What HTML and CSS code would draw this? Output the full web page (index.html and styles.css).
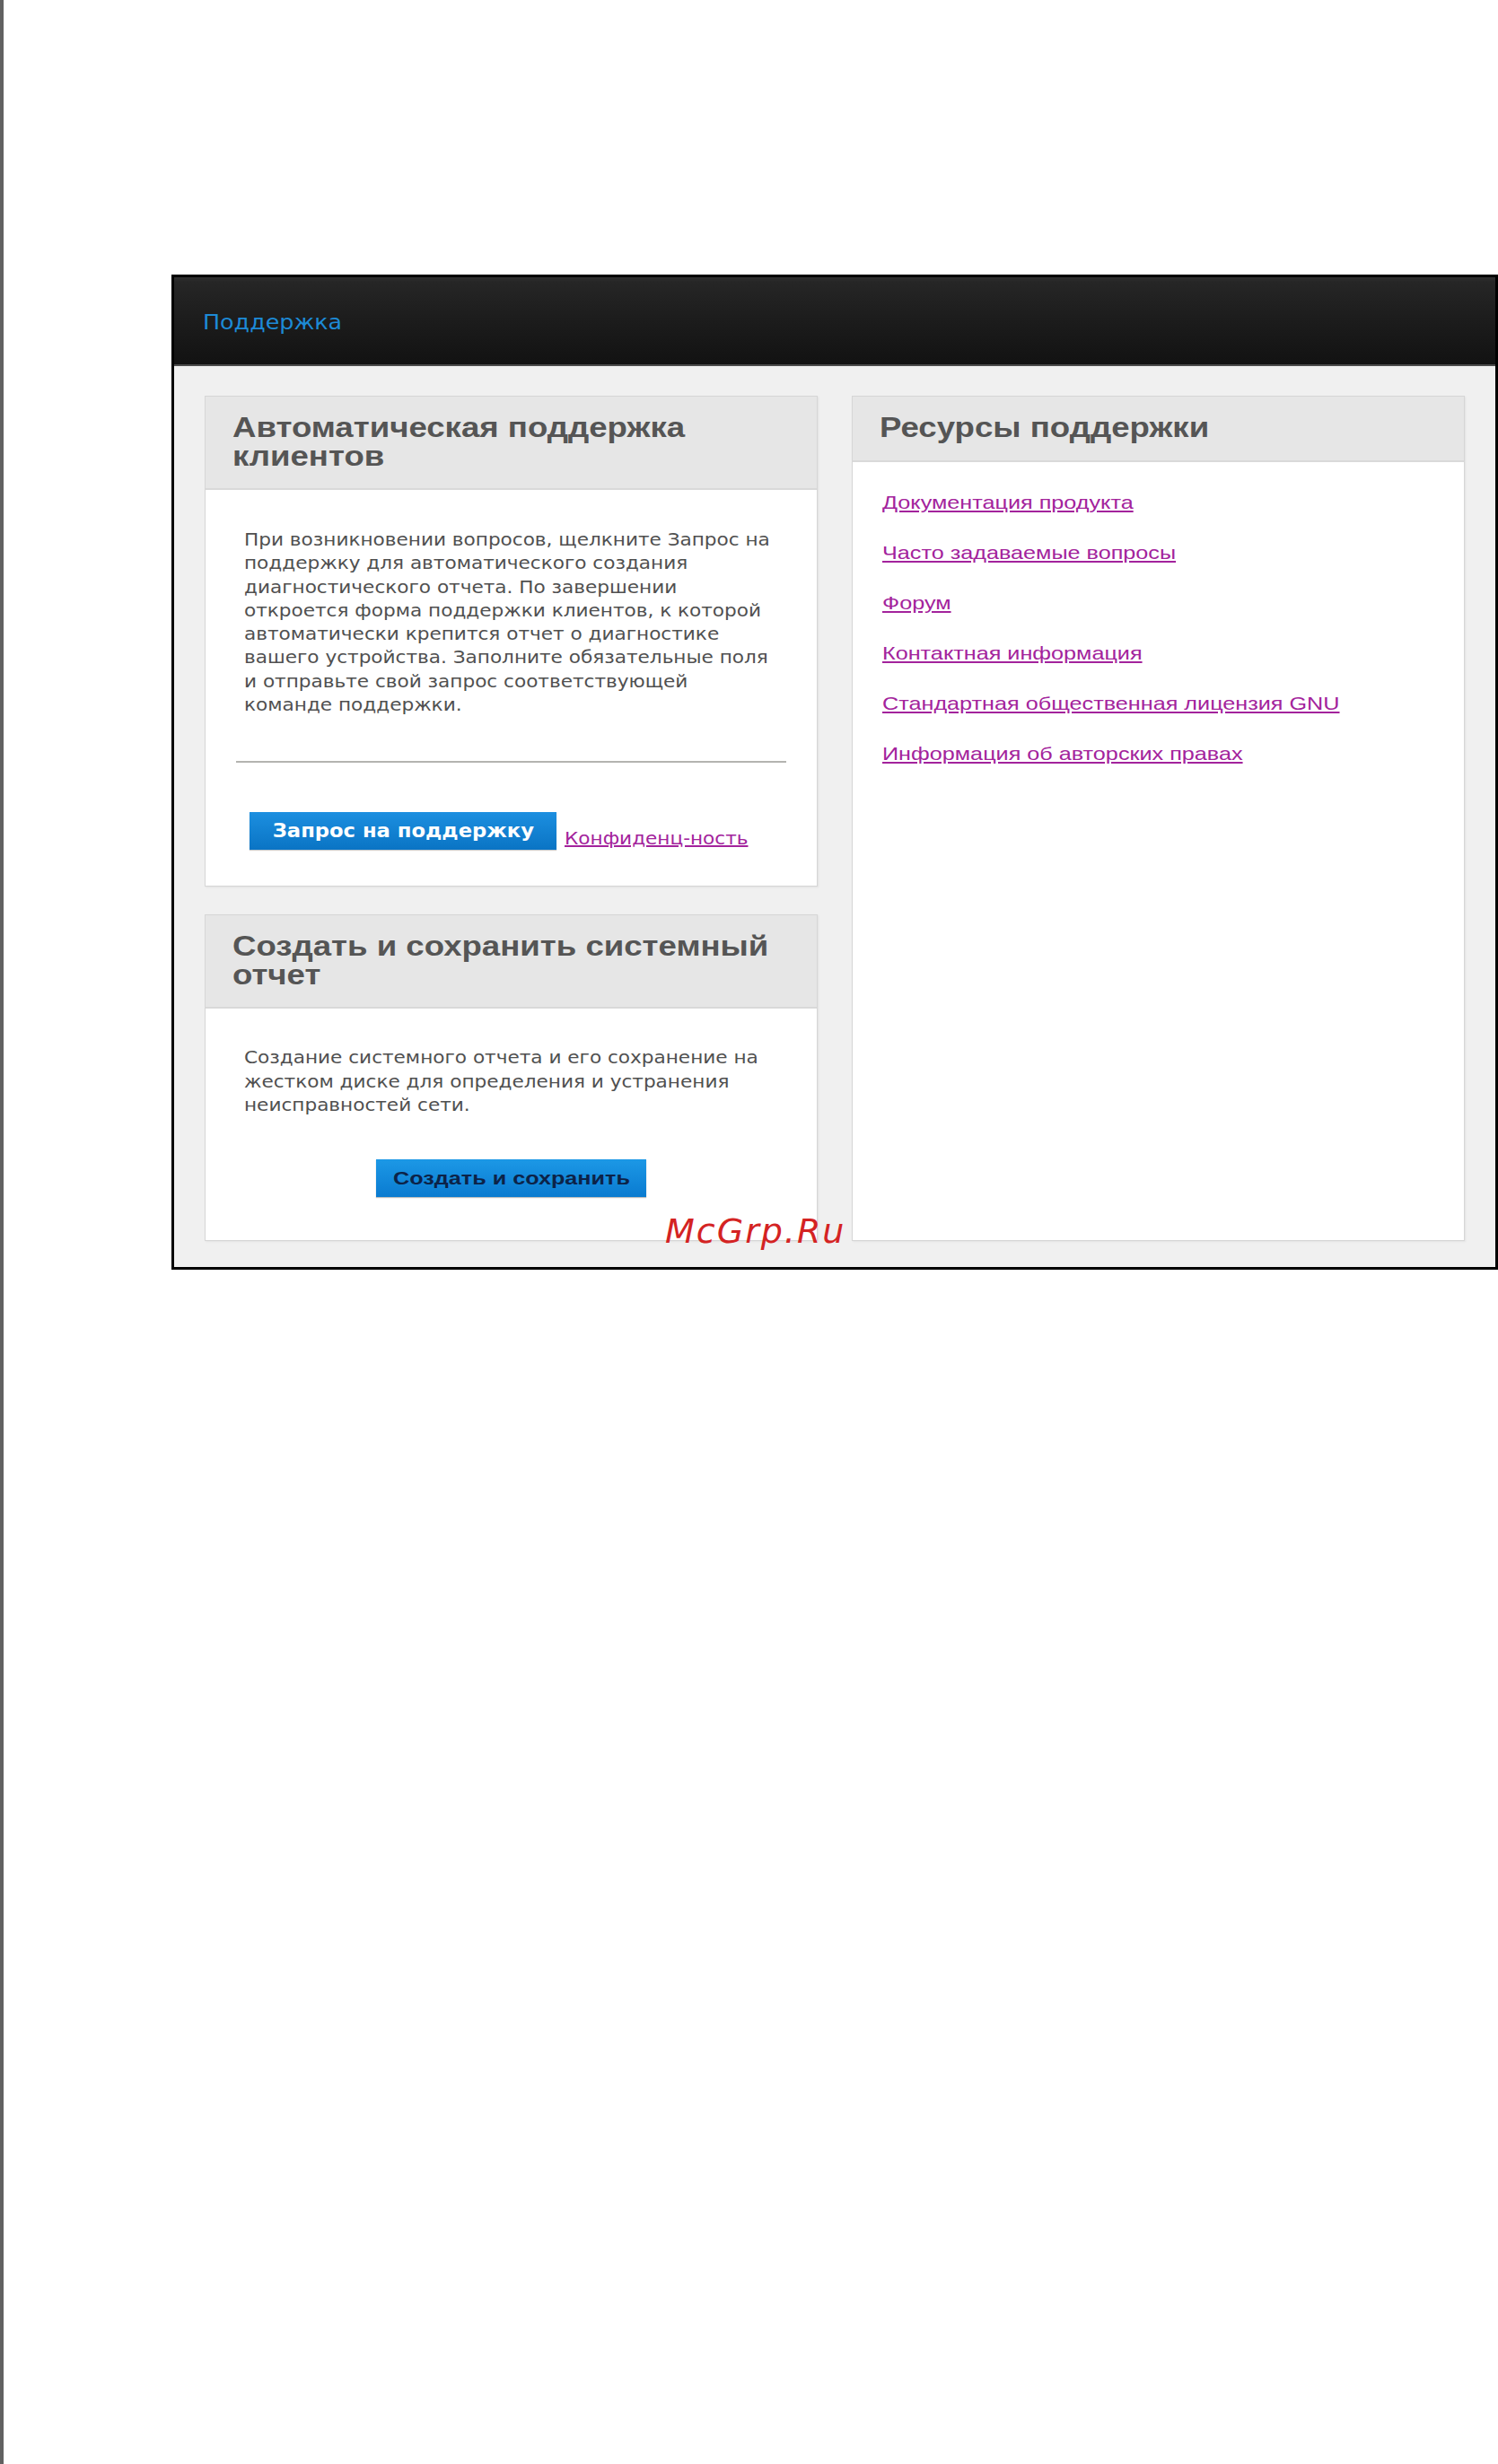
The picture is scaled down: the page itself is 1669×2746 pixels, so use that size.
FILE: index.html
```html
<!DOCTYPE html>
<html lang="ru">
<head>
<meta charset="utf-8">
<title>Поддержка</title>
<link rel="stylesheet" href="styles.css">
</head>
<body>
<div class="page">
  <div class="frame">
    <div class="topbar"><span class="topbar-title wide">Поддержка</span></div>
    <div class="content">
      <div class="col-left">
        <section class="panel panel-auto">
          <div class="panel-head"><h2 class="wide">Автоматическая поддержка<br>клиентов</h2></div>
          <div class="panel-body">
            <p class="desc wide">При возникновении вопросов, щелкните Запрос на<br>поддержку для автоматического создания<br>диагностического отчета. По завершении<br>откроется форма поддержки клиентов, к которой<br>автоматически крепится отчет о диагностике<br>вашего устройства. Заполните обязательные поля<br>и отправьте свой запрос соответствующей<br>команде поддержки.</p>
            <hr class="divider">
            <div class="actions">
              <button class="btn btn-request"><span class="wide-c">Запрос на поддержку</span></button>
              <a class="link privacy wide" href="#">Конфиденц-ность</a>
            </div>
          </div>
        </section>
        <section class="panel panel-report">
          <div class="panel-head"><h2 class="wide">Создать и сохранить системный<br>отчет</h2></div>
          <div class="panel-body">
            <p class="desc wide">Создание системного отчета и его сохранение на<br>жестком диске для определения и устранения<br>неисправностей сети.</p>
            <div class="center-actions">
              <button class="btn btn-save"><span class="wide-c">Создать и сохранить</span></button>
            </div>
          </div>
        </section>
      </div>
      <section class="panel panel-resources">
        <div class="panel-head single"><h2 class="wide">Ресурсы поддержки</h2></div>
        <div class="panel-body">
          <ul class="res-list">
            <li><a class="link wide" href="#">Документация продукта</a></li>
            <li><a class="link wide" href="#">Часто задаваемые вопросы</a></li>
            <li><a class="link wide" href="#">Форум</a></li>
            <li><a class="link wide" href="#">Контактная информация</a></li>
            <li><a class="link wide" href="#">Стандартная общественная лицензия GNU</a></li>
            <li><a class="link wide" href="#">Информация об авторских правах</a></li>
          </ul>
        </div>
      </section>
      <div class="watermark">McGrp.Ru</div>
    </div>
  </div>
</div>
</body>
</html>
```
FILE: styles.css
```css
html, body {
  margin: 0;
  padding: 0;
  background: #ffffff;
}
body {
  min-height: 2746px;
  border-left: 4px solid #616161;
  box-sizing: border-box;
  font-family: "DejaVu Sans", Verdana, sans-serif;
}
/* the original screen is rendered horizontally stretched */
.wide {
  display: inline-block;
  transform: scaleX(1.2);
  transform-origin: 0 50%;
  white-space: nowrap;
}
.wide-c {
  display: inline-block;
  transform: scaleX(1.2);
  transform-origin: 50% 50%;
  white-space: nowrap;
}
.page {
  padding-top: 306px;
  padding-left: 187px;
}
.frame {
  border: 3px solid #000;
  width: 1478px;
  box-sizing: border-box;
}
.topbar {
  height: 97px;
  background: linear-gradient(#303030 0, #262626 5px, #1d1d1d 45%, #121212 100%);
  border-bottom: 2px solid #4a4a4a;
  display: flex;
  align-items: center;
  padding-left: 32px;
}
.topbar-title {
  color: #1d8ad6;
  font-family: "DejaVu Sans Condensed", "DejaVu Sans", sans-serif;
  font-size: 23.5px;
  margin-top: 3px;
}
.content {
  position: relative;
  background: #f0f0f0;
  display: flex;
  gap: 38px;
  padding: 33px 31px 29px 34px;
}
.col-left {
  width: 683px;
  display: flex;
  flex-direction: column;
  gap: 31px;
}
.panel {
  background: #fff;
  border: 1px solid #d6d6d6;
  box-shadow: 1px 1px 2px rgba(0,0,0,0.06);
  box-sizing: border-box;
}
.panel-resources {
  width: 683px;
}
.panel-head {
  background: #e6e6e6;
  border-bottom: 2px solid #d9d9d9;
  padding: 18px 30px 20px;
}
.panel-head.single {
  padding: 18px 30px 21px;
}
.panel-head h2 {
  margin: 0;
  font-family: "Liberation Sans", Arial, sans-serif;
  font-weight: bold;
  font-size: 30.5px;
  line-height: 32px;
  color: #555555;
}
.desc {
  margin: 0;
  font-family: "DejaVu Sans Condensed", "DejaVu Sans", sans-serif;
  font-size: 20px;
  line-height: 26.3px;
  color: #505050;
}
.panel-auto .desc {
  display: block;
  margin: 42px 0 0 43px;
}
.divider {
  border: 0;
  border-top: 2px solid #b4b4b0;
  margin: 50px 34px 0 34px;
}
.actions {
  display: flex;
  align-items: flex-end;
  padding: 55px 0 40px 49px;
  gap: 9px;
}
.btn {
  border: 0;
  font-weight: bold;
  cursor: pointer;
  padding: 0;
}
.btn-request {
  width: 342px;
  height: 42px;
  color: #fff;
  font-family: "DejaVu Sans Condensed", "DejaVu Sans", sans-serif;
  font-size: 21px;
  background: linear-gradient(#1c8fe0, #0a74c4);
  box-shadow: 0 1px 1px rgba(0,0,0,0.2);
}
.privacy {
  font-family: "DejaVu Sans Condensed", "DejaVu Sans", sans-serif;
  font-size: 20px;
  line-height: 26px;
}
.link {
  color: #a3239c;
  text-decoration: underline;
}
.panel-report .desc {
  display: block;
  margin: 41px 0 0 43px;
}
.center-actions {
  display: flex;
  justify-content: center;
  padding: 48px 0 48px;
}
.btn-save {
  width: 301px;
  height: 42px;
  color: #0c2348;
  font-family: "Liberation Sans", Arial, sans-serif;
  font-size: 21px;
  background: linear-gradient(#1c98e6, #0a7bd0);
  box-shadow: 0 1px 1px rgba(0,0,0,0.25);
}
.res-list {
  list-style: none;
  margin: 0;
  padding: 32px 0 0 33px;
  display: flex;
  flex-direction: column;
  gap: 30px;
}
.res-list li {
  font-family: "Liberation Sans", Arial, sans-serif;
  font-size: 21px;
  line-height: 26px;
}
.watermark {
  position: absolute;
  left: 547px;
  top: 942px;
  font-family: "DejaVu Sans", sans-serif;
  font-style: italic;
  font-size: 38px;
  color: #d42323;
  letter-spacing: 2px;
}
```
